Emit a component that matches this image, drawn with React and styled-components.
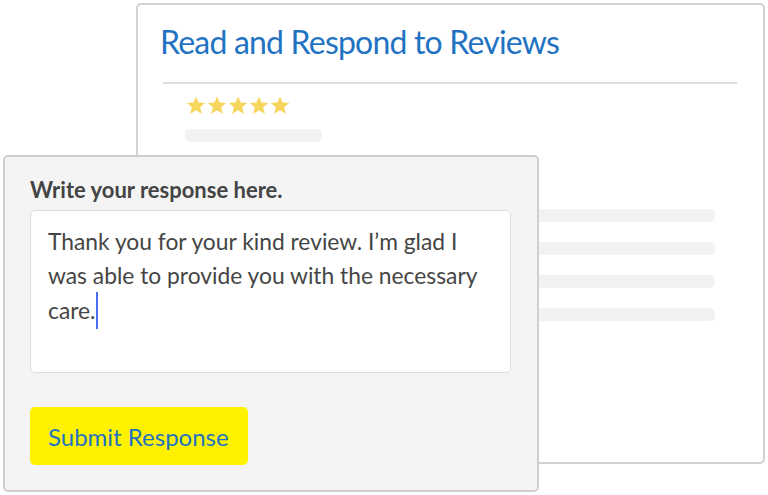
import React from 'react';
import styled, { createGlobalStyle } from 'styled-components';

const GlobalStyle = createGlobalStyle`
  html, body {
    margin: 0;
    padding: 0;
    background: #ffffff;
  }
  body {
    font-family: "Lato", "Open Sans", sans-serif;
  }
`;

const placeholderLines = [1, 2, 3, 4];

const Star = () => (
  <svg width="20" height="19" viewBox="0 0 24 23">
    <polygon
      points="12,0.5 15.1,8 23.3,8.4 17,13.7 19.1,21.7 12,17.3 4.9,21.7 7,13.7 0.7,8.4 8.9,8"
      fill="#f7d65d"
    />
  </svg>
);

export default function App() {
  return (
    <>
      <GlobalStyle />
      <Stage>
        <ReviewsCard>
          <Title>Read and Respond to Reviews</Title>
          <Divider />
          <ReviewBody>
            <Stars>
              {[0, 1, 2, 3, 4].map((i) => <Star key={i} />)}
            </Stars>
            <Bar width="137px" />
            <Lines>
              {placeholderLines.map((i) => (
                <Bar key={i} width="530px" />
              ))}
            </Lines>
          </ReviewBody>
        </ReviewsCard>

        <ResponseCard>
          <Label>Write your response here.</Label>
          <TextBox>
            Thank you for your kind review. I’m glad I was able to provide you with the necessary care.<Caret />
          </TextBox>
          <SubmitButton>Submit Response</SubmitButton>
        </ResponseCard>
      </Stage>
    </>
  );
}

const Stage = styled.div`
  position: relative;
  width: 768px;
  height: 495px;
  overflow: hidden;
`;

const ReviewsCard = styled.div`
  margin: 3px 0 0 136px;
  width: 629px;
  height: 461px;
  box-sizing: border-box;
  background: #ffffff;
  border: 2px solid #d2d2d2;
  border-radius: 5px;
  padding: 18px 26px 0 22px;
  display: flex;
  flex-direction: column;
`;

const Title = styled.h1`
  margin: 0;
  font-family: "Lato", sans-serif;
  font-weight: 400;
  font-size: 32px;
  letter-spacing: -0.8px;
  line-height: 38px;
  color: #1f73c2;
`;

const Divider = styled.div`
  margin: 21px 0 0 3px;
  height: 2px;
  background: #dddddd;
`;

const ReviewBody = styled.div`
  padding: 12px 0 0 25px;
  display: flex;
  flex-direction: column;
  align-items: flex-start;
`;

const Stars = styled.div`
  display: flex;
  gap: 1px;
  margin-left: 1px;
`;

const Bar = styled.div`
  width: ${(p) => p.width};
  height: 13px;
  border-radius: 5px;
  background: #f2f2f2;
  margin-top: 14px;
`;

const Lines = styled.div`
  display: flex;
  flex-direction: column;
  gap: 20px;
  margin-top: 67px;

  & > ${Bar} {
    margin-top: 0;
  }
`;

const ResponseCard = styled.div`
  position: absolute;
  left: 3px;
  top: 155px;
  width: 536px;
  height: 337px;
  box-sizing: border-box;
  background: #f4f4f4;
  border: 2px solid #cfcfcf;
  border-radius: 5px;
  padding: 19px 26px 0 25px;
  display: flex;
  flex-direction: column;
  align-items: flex-start;
`;

const Label = styled.div`
  font-family: "Lato", sans-serif;
  font-weight: 700;
  font-size: 22px;
  line-height: 28px;
  color: #444444;
`;

const TextBox = styled.div`
  margin-top: 6px;
  align-self: stretch;
  height: 163px;
  box-sizing: border-box;
  background: #ffffff;
  border: 1px solid #dcdcdc;
  border-radius: 5px;
  padding: 13px 22px 0 17px;
  font-family: "Lato", sans-serif;
  font-size: 22.8px;
  line-height: 34px;
  color: #454545;
`;

const Caret = styled.span`
  display: inline-block;
  width: 2px;
  height: 37px;
  background: #4a6cf0;
  vertical-align: -10px;
  margin-left: 1px;
`;

const SubmitButton = styled.button`
  margin-top: 34px;
  width: 218px;
  height: 58px;
  border: none;
  border-radius: 5px;
  background: #fff200;
  padding: 0 0 0 18px;
  text-align: left;
  font-family: "Lato", sans-serif;
  font-size: 24px;
  letter-spacing: 0;
  color: #1f73c2;
  cursor: pointer;
`;
